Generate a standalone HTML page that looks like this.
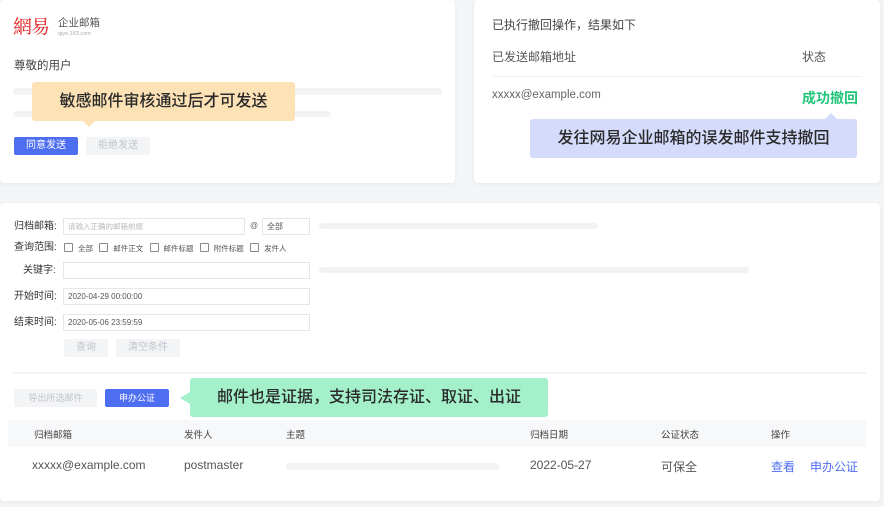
<!DOCTYPE html>
<html><head><meta charset="utf-8"><style>
*{margin:0;padding:0;box-sizing:border-box}
body{width:884px;height:507px;background:#f4f5f7;font-family:"Liberation Sans","Noto Sans CJK SC",sans-serif;position:relative;overflow:hidden;color:#333}
.a{position:absolute;white-space:nowrap}
.card{position:absolute;background:#fff;border-radius:4px;box-shadow:0 1px 4px rgba(0,0,0,.06)}
.bar{position:absolute;background:#f2f3f5;border-radius:3px}
.inp{position:absolute;border:1px solid #e4e6eb;background:#fff;font-size:8px;color:#555;padding-left:4px;line-height:15px}
.lbl{position:absolute;font-size:10px;color:#333;white-space:nowrap;line-height:12px}
.cb{display:inline-block;width:9px;height:9px;border:1px solid #888;border-radius:1px;vertical-align:-1px;margin-right:5px}
.btn{position:absolute;font-size:10px;text-align:center;border-radius:2px}
.tip{font-weight:500;color:#2a2a2a}
</style></head><body>
<div class="card" style="left:0;top:0;width:455px;height:183px"></div>
<div class="card" style="left:474px;top:0;width:406px;height:183px"></div>
<div class="card" style="left:0;top:203px;width:880px;height:298px"></div>

<div class="a" style="left:13px;top:15px;font-size:19px;line-height:22px;color:#e02020;font-family:'Noto Serif CJK SC',serif;letter-spacing:-1px">網易</div>
<div class="a" style="left:58px;top:17px;font-size:10.5px;line-height:12px;color:#555">企业邮箱</div>
<div class="a" style="left:58px;top:31px;font-size:5.5px;line-height:6px;color:#aaa">qiye.163.com</div>
<div class="a" style="left:14px;top:57px;font-size:11.5px;color:#444">尊敬的用户</div>
<div class="bar" style="left:13px;top:88px;width:429px;height:7px"></div>
<div class="bar" style="left:13px;top:111px;width:318px;height:6px"></div>
<div class="a tip" style="left:32px;top:82px;width:263px;height:39px;background:#fde2b5;border-radius:3px;font-size:16px;text-align:center;line-height:39px">敏感邮件审核通过后才可发送</div>
<div class="a" style="left:83px;top:121px;border-left:6px solid transparent;border-right:6px solid transparent;border-top:6px solid #fde2b5"></div>
<div class="btn" style="left:14px;top:137px;width:64px;height:18px;line-height:18px;background:#4e6ef2;color:#fff">同意发送</div>
<div class="btn" style="left:86px;top:137px;width:64px;height:18px;line-height:18px;background:#f3f4f6;color:#c0c4cc">拒绝发送</div>

<div class="a" style="left:492px;top:16px;font-size:12px;color:#444">已执行撤回操作，结果如下</div>
<div class="a" style="left:492px;top:48px;font-size:12px;color:#555">已发送邮箱地址</div>
<div class="a" style="left:802px;top:48px;font-size:12px;color:#555">状态</div>
<div class="a" style="left:492px;top:76px;width:370px;height:1px;background:#eef0f3"></div>
<div class="a" style="left:492px;top:89px;font-size:11.5px;color:#666">xxxxx@example.com</div>
<div class="a" style="left:802px;top:88px;font-size:14px;color:#22c57a;font-weight:bold">成功撤回</div>
<div class="a" style="left:825px;top:113px;border-left:6px solid transparent;border-right:6px solid transparent;border-bottom:6px solid #d5dbfb"></div>
<div class="a tip" style="left:530px;top:119px;width:327px;height:39px;background:#d5dbfb;border-radius:3px;font-size:16px;text-align:center;line-height:39px">发往网易企业邮箱的误发邮件支持撤回</div>

<div class="lbl" style="left:14px;top:221px">归档邮箱:</div>
<div class="inp" style="left:63px;top:218px;width:182px;height:17px;color:#bbb;font-size:7.5px">请输入正确的邮箱前缀</div>
<div class="a" style="left:250px;top:221px;font-size:8px;line-height:10px;color:#666">@</div>
<div class="inp" style="left:262px;top:218px;width:48px;height:17px;font-size:8px">全部</div>
<div class="bar" style="left:319px;top:223px;width:279px;height:6px"></div>
<div class="lbl" style="left:14px;top:242px">查询范围:</div>
<div class="a" style="left:64px;top:243px;font-size:7.5px;line-height:10px;color:#555"><span class="cb"></span>全部 &nbsp; <span class="cb"></span>邮件正文 &nbsp; <span class="cb"></span>邮件标题 &nbsp; <span class="cb"></span>附件标题 &nbsp; <span class="cb"></span>发件人</div>
<div class="lbl" style="left:23px;top:265px">关键字:</div>
<div class="inp" style="left:63px;top:262px;width:247px;height:17px"></div>
<div class="bar" style="left:319px;top:267px;width:430px;height:6px"></div>
<div class="lbl" style="left:14px;top:291px">开始时间:</div>
<div class="inp" style="left:63px;top:288px;width:247px;height:17px">2020-04-29 00:00:00</div>
<div class="lbl" style="left:14px;top:317px">结束时间:</div>
<div class="inp" style="left:63px;top:314px;width:247px;height:17px">2020-05-06 23:59:59</div>
<div class="btn" style="left:64px;top:339px;width:44px;height:18px;line-height:18px;background:#f3f4f6;color:#c0c4cc">查询</div>
<div class="btn" style="left:116px;top:339px;width:64px;height:18px;line-height:18px;background:#f3f4f6;color:#c0c4cc">清空条件</div>
<div class="a" style="left:13px;top:372px;width:853px;height:2px;background:#f2f3f5"></div>
<div class="btn" style="left:14px;top:389px;width:83px;height:18px;line-height:18px;background:#f3f4f6;color:#c0c4cc;font-size:9px">导出所选邮件</div>
<div class="btn" style="left:105px;top:389px;width:64px;height:18px;line-height:18px;background:#4e6ef2;color:#fff;font-size:9px">申办公证</div>
<div class="a" style="left:180px;top:392px;border-top:6px solid transparent;border-bottom:6px solid transparent;border-right:10px solid #a3f0cb"></div>
<div class="a tip" style="left:190px;top:378px;width:358px;height:39px;background:#a3f0cb;border-radius:3px;font-size:16px;text-align:center;line-height:39px">邮件也是证据，支持司法存证、取证、出证</div>
<div class="a" style="left:8px;top:420px;width:858px;height:27px;background:#f7f8fa"></div>
<div class="a" style="left:34px;top:427px;font-size:9.5px;color:#444">归档邮箱</div>
<div class="a" style="left:184px;top:427px;font-size:9.5px;color:#444">发件人</div>
<div class="a" style="left:286px;top:427px;font-size:9.5px;color:#444">主题</div>
<div class="a" style="left:530px;top:427px;font-size:9.5px;color:#444">归档日期</div>
<div class="a" style="left:661px;top:427px;font-size:9.5px;color:#444">公证状态</div>
<div class="a" style="left:771px;top:427px;font-size:9.5px;color:#444">操作</div>
<div class="a" style="left:32px;top:458px;font-size:12px;color:#555">xxxxx@example.com</div>
<div class="a" style="left:184px;top:458px;font-size:12px;color:#555">postmaster</div>
<div class="bar" style="left:286px;top:463px;width:213px;height:7px"></div>
<div class="a" style="left:530px;top:458px;font-size:12px;color:#555">2022-05-27</div>
<div class="a" style="left:661px;top:458px;font-size:12px;color:#555">可保全</div>
<div class="a" style="left:771px;top:458px;font-size:12px;color:#4e6ef2">查看</div>
<div class="a" style="left:810px;top:458px;font-size:12px;color:#4e6ef2">申办公证</div>
</body></html>
